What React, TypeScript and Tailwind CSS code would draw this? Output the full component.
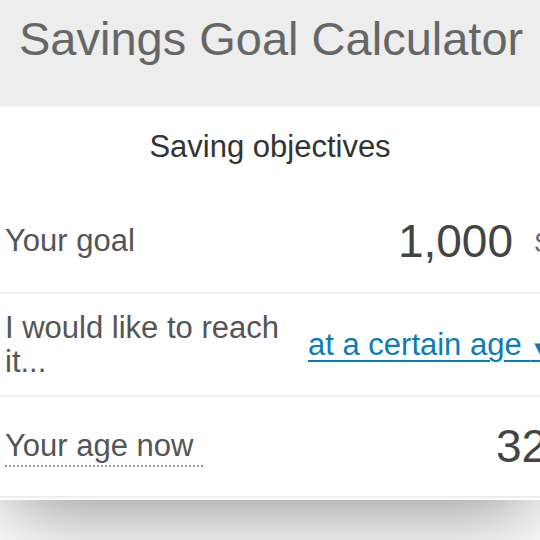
export default function App() {
  return (
    <main className="w-[540px] h-[540px] overflow-hidden bg-white font-['Liberation_Sans',Arial,sans-serif]">
      <div className="relative z-10 h-[106px] bg-[#ededed] pl-[19px] pt-[10px]">
        <h1 className="text-[47px] leading-[58px] text-[#666666] whitespace-nowrap">
          Savings Goal Calculator
        </h1>
      </div>

      <div className="w-[540px] bg-white shadow-[0_16px_80px_-8px_rgba(0,0,0,0.47)]">
        <div className="h-[84px] flex items-center justify-center pb-[2px]">
          <h2 className="text-[31px] text-[#333333]">Saving objectives</h2>
        </div>

        <div className="h-[104px] flex items-center border-b-2 border-[#eeeeee]">
          <div className="w-[300px] shrink-0 pl-[5px] text-[31px] text-[#555555]">
            Your goal
          </div>
          <div className="w-[213px] shrink-0 text-right text-[46px] text-[#444444]">
            1,000
          </div>
          <div className="shrink-0 pl-[22px] text-[28px] text-[#666666] pt-[4px]">$</div>
        </div>

        <div className="h-[103px] flex items-center border-b-2 border-[#eeeeee]">
          <div className="w-[308px] shrink-0 pl-[5px] pr-[12px] text-[31px] leading-[34px] text-[#555555]">
            I would like to reach it...
          </div>
          <div className="shrink-0 whitespace-nowrap text-[31px] text-[#0b7db3] underline underline-offset-[5px] decoration-2 pt-[2px]">
            at a certain age <span className="text-[20px]">▼</span>
          </div>
        </div>

        <div className="h-[101px] flex items-center border-b-2 border-[#eeeeee]">
          <div className="w-[496px] shrink-0 pl-[5px]">
            <span className="text-[31px] text-[#555555] border-b-2 border-dotted border-[#999999] pb-[2px] pr-[10px]">
              Your age now
            </span>
          </div>
          <div className="shrink-0 text-[46px] text-[#444444]">32</div>
        </div>
        <div className="h-[2px]" />
      </div>
    </main>
  );
}
